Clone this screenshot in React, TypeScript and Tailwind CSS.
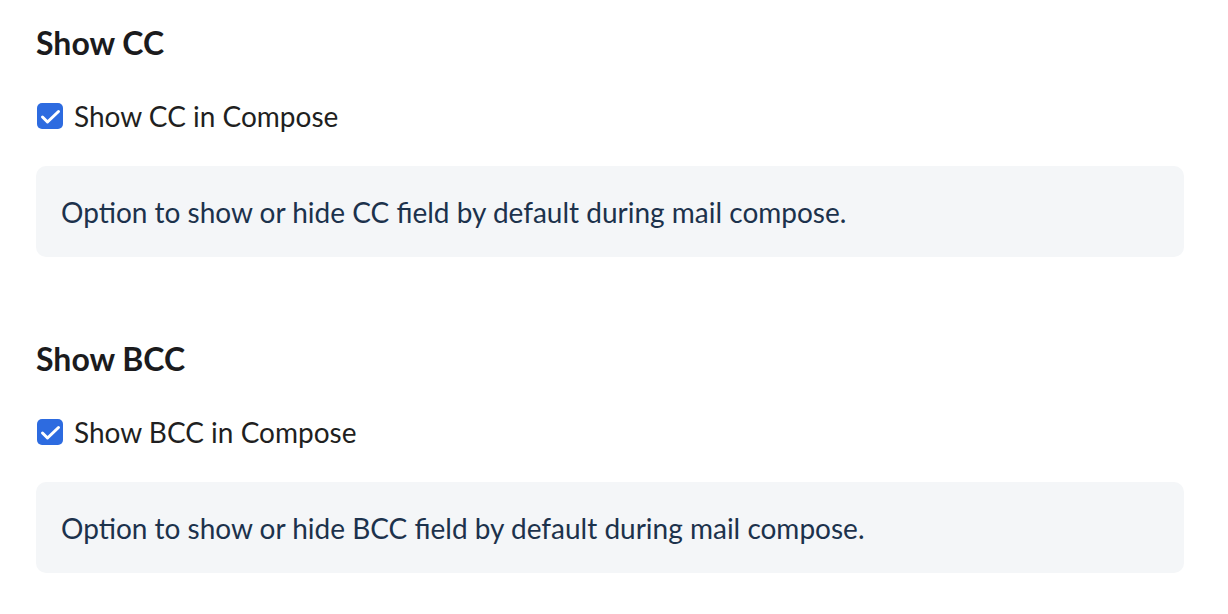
import React from 'react';

const sections = [
  { title: 'Show CC', label: 'Show CC in Compose', desc: 'Option to show or hide CC field by default during mail compose.' },
  { title: 'Show BCC', label: 'Show BCC in Compose', desc: 'Option to show or hide BCC field by default during mail compose.' },
];

const CheckBox = () => (
  <span className="ml-[1px] flex h-[26px] w-[26px] shrink-0 items-center justify-center rounded-[5px] bg-[#2d6be0]">
    <svg viewBox="0 0 26 26" className="h-[26px] w-[26px]" fill="none" stroke="white" strokeWidth="3" strokeLinecap="round" strokeLinejoin="round">
      <path d="M5.5 14l5 5L21.5 8.5" />
    </svg>
  </span>
);

export default function App() {
  return (
    <div className="min-h-[614px] bg-white pl-[36px] pr-[44px] pt-[25px]" style={{ fontFamily: 'Lato, "Noto Sans", sans-serif' }}>
      {sections.map((s, i) => (
        <div key={i} className={i > 0 ? 'mt-[84px]' : ''}>
          <h2 className="text-[32px] font-bold leading-[36px] text-[#1b1b1d]">{s.title}</h2>
          <label className="mt-[38px] flex items-center gap-[11px]">
            <CheckBox />
            <span className="text-[28px] leading-[34px] text-[#1f1f21]">{s.label}</span>
          </label>
          <div className="mt-[33px] flex h-[91px] items-center rounded-[10px] bg-[#f4f6f8] px-[25px]">
            <p className="text-[28px] text-[#1c324c]">{s.desc}</p>
          </div>
        </div>
      ))}
    </div>
  );
}
